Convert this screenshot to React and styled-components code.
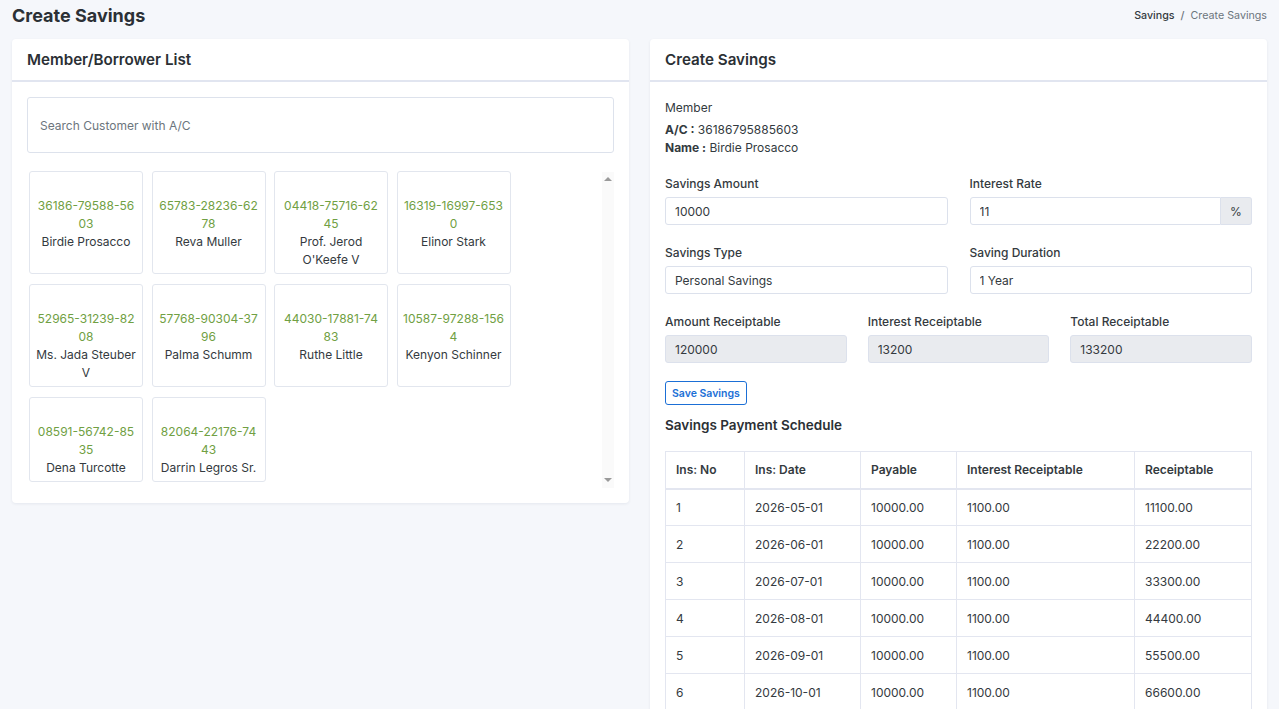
import React from "react";
import styled, { createGlobalStyle } from "styled-components";

const GlobalStyle = createGlobalStyle`
	html {
		scrollbar-width: none;
	}
	body {
		margin: 0;
		background: #f5f7fb;
		font-family: Inter, "Noto Sans", "Liberation Sans", sans-serif;
		font-size: 12px;
		color: #333a40;
	}
	* {
		box-sizing: border-box;
	}
`;

const customers = [
	{ ac: "36186-79588-5603", name: "Birdie Prosacco" },
	{ ac: "65783-28236-6278", name: "Reva Muller" },
	{ ac: "04418-75716-6245", name: "Prof. Jerod O'Keefe V" },
	{ ac: "16319-16997-6530", name: "Elinor Stark" },
	{ ac: "52965-31239-8208", name: "Ms. Jada Steuber V" },
	{ ac: "57768-90304-3796", name: "Palma Schumm" },
	{ ac: "44030-17881-7483", name: "Ruthe Little" },
	{ ac: "10587-97288-1564", name: "Kenyon Schinner" },
	{ ac: "08591-56742-8535", name: "Dena Turcotte" },
	{ ac: "82064-22176-7443", name: "Darrin Legros Sr." },
];

const schedule = Array.from({ length: 12 }, (_, i) => {
	const d = new Date(2026, 4 + i, 1);
	const mm = String(d.getMonth() + 1).padStart(2, "0");
	return {
		no: i + 1,
		date: `${d.getFullYear()}-${mm}-01`,
		payable: "10000.00",
		interest: "1100.00",
		receiptable: (11100 * (i + 1)).toFixed(2),
	};
});

const App = () => {
	return (
		<>
			<GlobalStyle />
			<Page>
				<TopBar>
					<PageTitle>Create Savings</PageTitle>
					<Breadcrumb>
						<span>Savings</span>
						<Sep>/</Sep>
						<Current>Create Savings</Current>
					</Breadcrumb>
				</TopBar>
				<Columns>
					<Card>
						<CardHeader>
							<h4>Member/Borrower List</h4>
						</CardHeader>
						<CardBody>
							<SearchInput placeholder="Search Customer with A/C" />
							<ListWrap>
								<CustomerList>
									{customers.map((c) => (
										<Tile key={c.ac}>
											<Account>{c.ac}</Account>
											<Name>{c.name}</Name>
										</Tile>
									))}
								</CustomerList>
								<ScrollTrack>
									<Arrow $dir="up" />
									<Arrow $dir="down" />
								</ScrollTrack>
							</ListWrap>
						</CardBody>
					</Card>

					<Card>
						<CardHeader>
							<h4>Create Savings</h4>
						</CardHeader>
						<CardBody>
							<MemberInfo>
								<div>Member</div>
								<div>
									<b>A/C :</b> 36186795885603
								</div>
								<div>
									<b>Name :</b> Birdie Prosacco
								</div>
							</MemberInfo>

							<FormRow $cols={2}>
								<Field>
									<Label>Savings Amount</Label>
									<Input defaultValue="10000" />
								</Field>
								<Field>
									<Label>Interest Rate</Label>
									<InputGroup>
										<Input defaultValue="11" $grouped />
										<Addon>%</Addon>
									</InputGroup>
								</Field>
							</FormRow>

							<FormRow $cols={2}>
								<Field>
									<Label>Savings Type</Label>
									<Input defaultValue="Personal Savings" />
								</Field>
								<Field>
									<Label>Saving Duration</Label>
									<Input defaultValue="1 Year" />
								</Field>
							</FormRow>

							<FormRow $cols={3} $last>
								<Field>
									<Label>Amount Receiptable</Label>
									<Input defaultValue="120000" readOnly $disabled />
								</Field>
								<Field>
									<Label>Interest Receiptable</Label>
									<Input defaultValue="13200" readOnly $disabled />
								</Field>
								<Field>
									<Label>Total Receiptable</Label>
									<Input defaultValue="133200" readOnly $disabled />
								</Field>
							</FormRow>

							<SaveButton>Save Savings</SaveButton>

							<SectionTitle>Savings Payment Schedule</SectionTitle>

							<Table>
								<colgroup>
									<col style={{ width: 79 }} />
									<col style={{ width: 116 }} />
									<col style={{ width: 96 }} />
									<col style={{ width: 178 }} />
									<col />
								</colgroup>
								<thead>
									<tr>
										<th>Ins: No</th>
										<th>Ins: Date</th>
										<th>Payable</th>
										<th>Interest Receiptable</th>
										<th>Receiptable</th>
									</tr>
								</thead>
								<tbody>
									{schedule.map((r) => (
										<tr key={r.no}>
											<td>{r.no}</td>
											<td>{r.date}</td>
											<td>{r.payable}</td>
											<td>{r.interest}</td>
											<td>{r.receiptable}</td>
										</tr>
									))}
								</tbody>
							</Table>
						</CardBody>
					</Card>
				</Columns>
			</Page>
		</>
	);
};

const Page = styled.div`
	padding: 0 12px 20px;
`;

const TopBar = styled.div`
	display: flex;
	justify-content: space-between;
	align-items: center;
	height: 30px;
	margin-bottom: 9px;
`;

const PageTitle = styled.h2`
	margin: 0;
	font-size: 18px;
	font-weight: 700;
	color: #2b3035;
`;

const Breadcrumb = styled.div`
	font-size: 10.7px;
	color: #333a40;
	font-weight: 500;
`;

const Sep = styled.span`
	margin: 0 6px;
	color: #6c757d;
`;

const Current = styled.span`
	color: #6c757d;
	font-weight: 400;
`;

const Columns = styled.div`
	display: grid;
	grid-template-columns: 1fr 1fr;
	gap: 21px;
	align-items: start;
`;

const Card = styled.div`
	background: #fff;
	border-radius: 4px;
	box-shadow: 0 1px 3px rgba(40, 50, 90, 0.08);
`;

const CardHeader = styled.div`
	height: 43px;
	padding: 0 15px;
	display: flex;
	align-items: center;
	border-bottom: 2px solid #e1e5f0;
	h4 {
		margin: 0;
		font-size: 15.2px;
		font-weight: 600;
		color: #2b3035;
	}
`;

const CardBody = styled.div`
	padding: 15px;
`;

const SearchInput = styled.input`
	display: block;
	width: 100%;
	height: 56px;
	padding: 0 12px;
	border: 1px solid #dde2ec;
	border-radius: 3px;
	font-family: inherit;
	font-size: 12px;
	color: #333;
	outline: none;
	margin-bottom: 15px;
	&::placeholder {
		color: #6c757d;
	}
`;

const ListWrap = styled.div`
	display: flex;
	height: 320px;
`;

const CustomerList = styled.div`
	flex: 1;
	padding: 3px 2px;
	display: flex;
	flex-wrap: wrap;
	align-content: flex-start;
	gap: 10px 8.5px;
`;

const ScrollTrack = styled.div`
	width: 12px;
	margin: 4px 0 0;
	background: #fafafa;
	display: flex;
	flex-direction: column;
	justify-content: space-between;
	align-items: center;
	padding: 5px 0 6px;
`;

const Arrow = styled.span`
	width: 0;
	height: 0;
	border-left: 4px solid transparent;
	border-right: 4px solid transparent;
	${(p) =>
		p.$dir === "up"
			? "border-bottom: 4px solid #9a9a9a;"
			: "border-top: 4px solid #9a9a9a;"}
`;

const Tile = styled.div`
	width: 114px;
	border: 1px solid #e2e6ee;
	border-radius: 3px;
	padding: 25px 5.5px 4px;
	text-align: center;
	line-height: 18px;
	font-size: 12px;
`;

const Account = styled.div`
	color: #70a043;
	word-break: break-all;
`;

const Name = styled.div`
	color: #343a40;
`;

const MemberInfo = styled.div`
	line-height: 18px;
	margin: 2px 0 18px;
	div:first-child {
		margin-bottom: 4px;
	}
	b {
		font-weight: 700;
	}
`;

const FormRow = styled.div`
	display: grid;
	grid-template-columns: repeat(${(p) => p.$cols}, 1fr);
	gap: ${(p) => (p.$cols === 3 ? "21px" : "22px")};
	margin-bottom: ${(p) => (p.$last ? "18px" : "19px")};
`;

const Field = styled.div`
	display: flex;
	flex-direction: column;
`;

const Label = styled.label`
	font-weight: 500;
	color: #343a40;
	line-height: 18px;
	margin-bottom: 4px;
`;

const InputGroup = styled.div`
	display: flex;
`;

const Input = styled.input`
	width: 100%;
	height: 28px;
	padding: 0 9px;
	border: 1px solid #dce1ec;
	border-radius: ${(p) => (p.$grouped ? "3px 0 0 3px" : "3px")};
	background: ${(p) => (p.$disabled ? "#e9ebef" : "#fff")};
	font-family: inherit;
	font-size: 12px;
	color: #343a40;
	outline: none;
`;

const Addon = styled.span`
	flex: 0 0 31px;
	display: flex;
	align-items: center;
	justify-content: center;
	border: 1px solid #dce1ec;
	border-left: none;
	border-radius: 0 3px 3px 0;
	background: #e9ebef;
	color: #343a40;
`;

const SaveButton = styled.button`
	display: block;
	height: 24px;
	padding: 0 6px;
	background: #fff;
	border: 1px solid #1b6fd6;
	border-radius: 3px;
	color: #1b6fd6;
	font-family: inherit;
	font-size: 10.5px;
	font-weight: 600;
	margin: 0 0 11px;
`;

const SectionTitle = styled.h5`
	margin: 0 0 17px;
	font-size: 13.5px;
	font-weight: 600;
	color: #2b3035;
	line-height: 18px;
`;

const Table = styled.table`
	width: 100%;
	border-collapse: collapse;
	table-layout: fixed;
	font-size: 12px;
	color: #343a40;
	th,
	td {
		border: 1px solid #e3e6f0;
		text-align: left;
		padding: 0 10px;
		height: 37px;
	}
	th {
		font-weight: 600;
		border-bottom: 2px solid #e3e6f0;
	}
`;

export default App;
